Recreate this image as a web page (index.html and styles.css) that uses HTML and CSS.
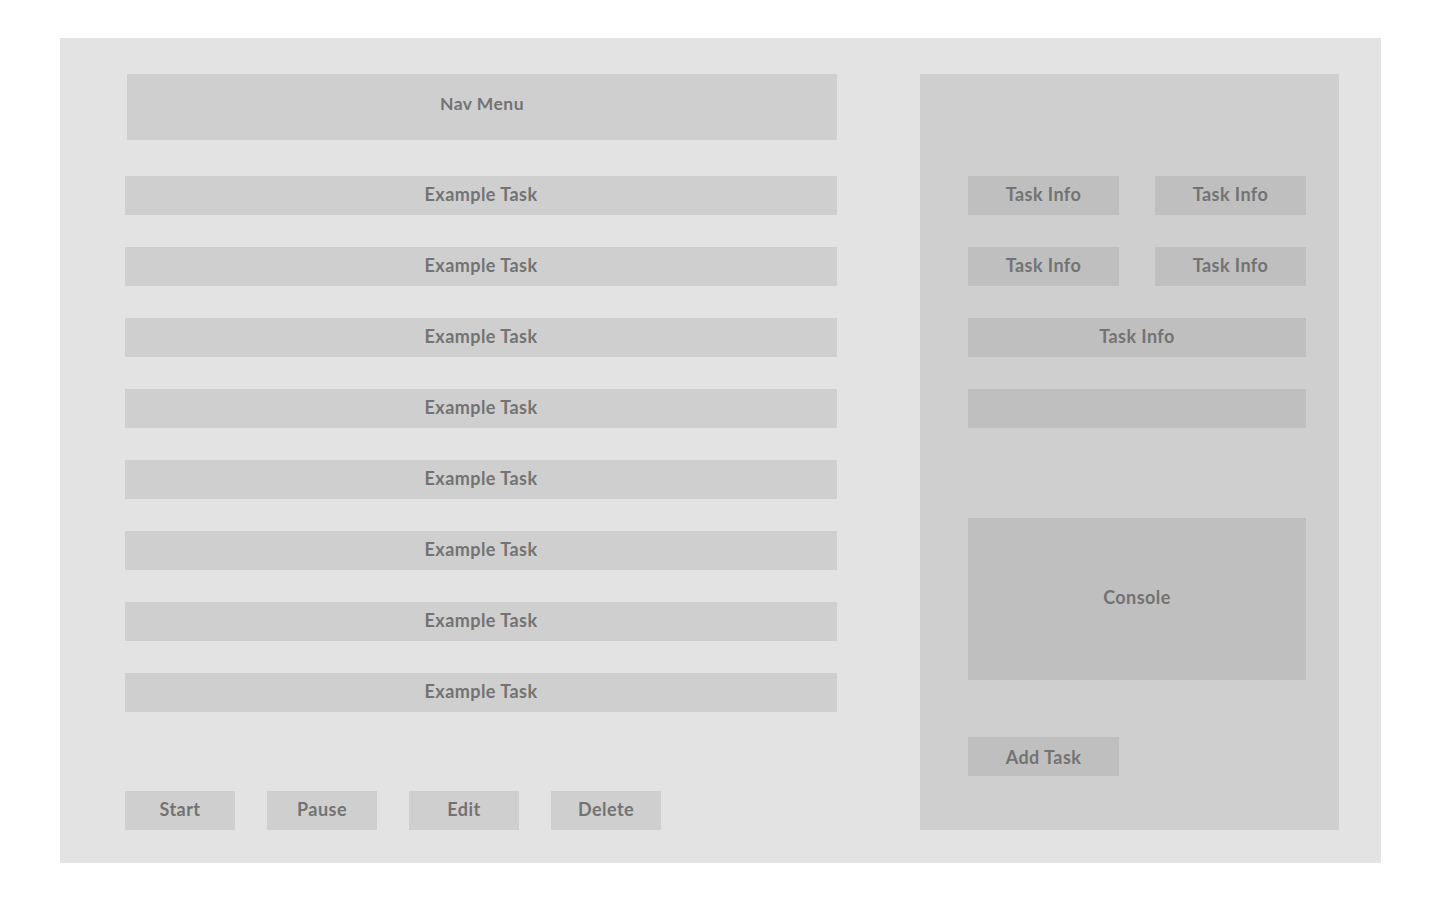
FILE: index.html
```html
<!DOCTYPE html>
<html>
<head>
<meta charset="utf-8">
<link rel="stylesheet" href="styles.css">
</head>
<body>
<div class="frame">
  <div class="left">
    <div class="nav">Nav Menu</div>
    <div class="tasks">
      <div class="task">Example Task</div>
      <div class="task">Example Task</div>
      <div class="task">Example Task</div>
      <div class="task">Example Task</div>
      <div class="task">Example Task</div>
      <div class="task">Example Task</div>
      <div class="task">Example Task</div>
      <div class="task">Example Task</div>
    </div>
    <div class="actions">
      <div class="btn">Start</div>
      <div class="btn">Pause</div>
      <div class="btn">Edit</div>
      <div class="btn">Delete</div>
    </div>
  </div>
  <div class="panel">
    <div class="info-grid">
      <div class="info">Task Info</div>
      <div class="info">Task Info</div>
      <div class="info">Task Info</div>
      <div class="info">Task Info</div>
      <div class="info wide">Task Info</div>
      <div class="info wide"></div>
    </div>
    <div class="console">Console</div>
    <div class="info add">Add Task</div>
  </div>
</div>
</body>
</html>
```
FILE: styles.css
```css
* { box-sizing: border-box; }
html, body { margin: 0; padding: 0; background: #ffffff; }
body {
  font-family: "Lato", "Open Sans", "Liberation Sans", sans-serif;
  font-weight: 700;
  color: #737373;
  letter-spacing: 0.45px;
}
.frame {
  margin: 38px 0 0 60px;
  width: 1321px;
  height: 825px;
  background: #e3e3e3;
  display: flex;
  padding: 36px 0 0 65px;
}
.left {
  width: 712px;
  display: flex;
  flex-direction: column;
}
.nav {
  margin-left: 2px;
  height: 66px;
  background: #cfcfcf;
  display: flex;
  align-items: center;
  justify-content: center;
  padding-bottom: 8px;
  font-size: 17.5px;
}
.tasks {
  margin-top: 36px;
  display: flex;
  flex-direction: column;
  gap: 32px;
}
.task {
  height: 39px;
  background: #cfcfcf;
  display: flex;
  align-items: center;
  justify-content: center;
  padding-bottom: 3px;
  font-size: 18px;
}
.actions {
  margin-top: 79px;
  display: flex;
  gap: 32px;
}
.btn {
  width: 110px;
  height: 39px;
  background: #cfcfcf;
  display: flex;
  align-items: center;
  justify-content: center;
  padding-bottom: 3px;
  font-size: 18px;
}
.panel {
  margin-left: 83px;
  width: 419px;
  height: 756px;
  background: #cfcfcf;
  padding: 102px 0 0 48px;
  display: flex;
  flex-direction: column;
}
.info-grid {
  width: 338px;
  display: grid;
  grid-template-columns: 151px 151px;
  column-gap: 36px;
  row-gap: 32px;
  grid-auto-rows: 39px;
}
.info {
  background: #bfbfbf;
  display: flex;
  align-items: center;
  justify-content: center;
  padding-bottom: 3px;
  font-size: 18px;
  height: 39px;
}
.info.wide { grid-column: 1 / 3; }
.console {
  margin-top: 90px;
  width: 338px;
  height: 162px;
  background: #bfbfbf;
  display: flex;
  align-items: center;
  justify-content: center;
  padding-bottom: 4px;
  font-size: 18px;
}
.add {
  margin-top: 57px;
  width: 151px;
  padding-bottom: 0;
}
```
